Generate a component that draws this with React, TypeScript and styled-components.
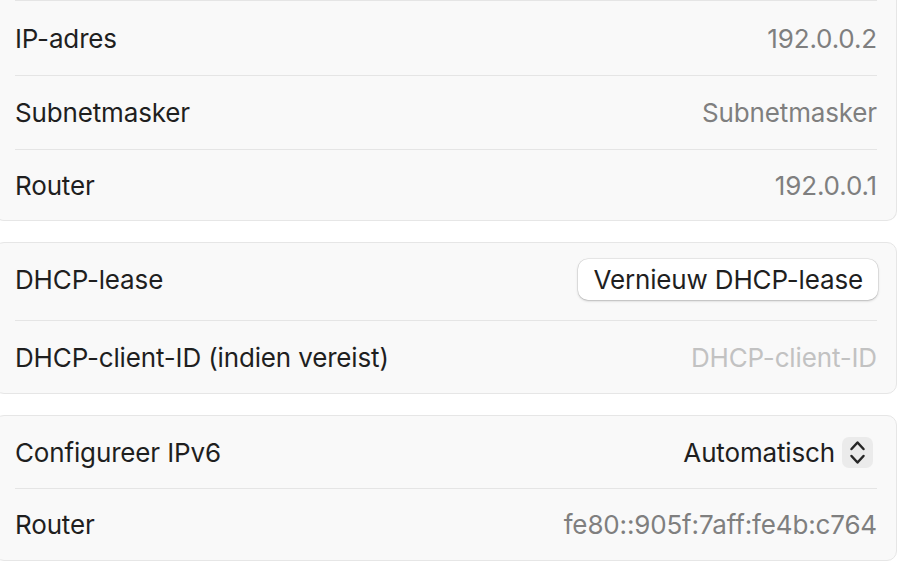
import React from "react";
import styled, { createGlobalStyle } from "styled-components";

const Global = createGlobalStyle`
  html, body { margin: 0; padding: 0; background: #ffffff; }
  body { font-family: Inter, "Noto Sans", "Liberation Sans", sans-serif; -webkit-font-smoothing: antialiased; }
`;

const Viewport = styled.div`
  width: 920px;
  height: 572px;
  overflow: hidden;
  background: #ffffff;
`;

const Content = styled.div`
  display: flex;
  flex-direction: column;
  gap: 21px;
  margin: 0 23px 0 -6px;
`;

const Card = styled.section<{ $cutTop?: boolean }>`
  background: #f9f9f9;
  border: 1px solid #e6e6e6;
  border-top: ${(p) => (p.$cutTop ? "none" : "1px solid #e6e6e6")};
  border-radius: ${(p) => (p.$cutTop ? "0 0 10px 10px" : "10px")};
  padding: 0 19px 0 20px;
  display: flex;
  flex-direction: column;
`;

const Row = styled.div<{ $h?: number; $rule?: boolean; $pb?: number }>`
  display: flex;
  align-items: center;
  justify-content: space-between;
  box-sizing: border-box;
  height: ${(p) => p.$h ?? 72}px;
  padding-bottom: ${(p) => p.$pb ?? 0}px;
  border-top: ${(p) => (p.$rule ? "1px solid #e5e5e5" : "none")};
  & + & {
    border-top: 1px solid #e5e5e5;
  }
`;

const Label = styled.span`
  font-size: 26px;
  color: #1f1f1f;
  letter-spacing: -0.15px;
`;

const Value = styled.span<{ $tone?: "muted" | "placeholder" }>`
  font-size: 26px;
  letter-spacing: -0.15px;
  color: ${(p) => (p.$tone === "placeholder" ? "#c2c2c2" : "#7f7f7f")};
`;

const Button = styled.button`
  height: 41px;
  padding: 0 15px;
  margin-right: -1px;
  border: none;
  border-radius: 10px;
  background: #ffffff;
  box-shadow: 0 0 0 0.5px rgba(0, 0, 0, 0.12), 0 1px 2.5px rgba(0, 0, 0, 0.22);
  font-family: inherit;
  font-size: 26px;
  letter-spacing: -0.15px;
  color: #1f1f1f;
`;

const Popup = styled.div`
  display: flex;
  align-items: center;
  gap: 7px;
  margin-right: 4px;
  font-size: 26px;
  letter-spacing: -0.15px;
  color: #1f1f1f;
`;

const Stepper = styled.span`
  width: 31px;
  height: 31px;
  border-radius: 7px;
  background: #ebebeb;
  display: flex;
  align-items: center;
  justify-content: center;
`;

const UpDown = () => (
  <svg width="31" height="31" viewBox="0 0 31 31" fill="none">
    <path d="M9.5 12 L15.5 5.5 L21.5 12" stroke="#262626" strokeWidth="2.5" strokeLinecap="round" strokeLinejoin="round" />
    <path d="M9.5 19 L15.5 25.5 L21.5 19" stroke="#262626" strokeWidth="2.5" strokeLinecap="round" strokeLinejoin="round" />
  </svg>
);

export default function App() {
  return (
    <>
      <Global />
      <Viewport>
        <Content>
          <Card $cutTop>
            <Row $h={75} $rule>
              <Label>IP-adres</Label>
              <Value>192.0.0.2</Value>
            </Row>
            <Row $h={74}>
              <Label>Subnetmasker</Label>
              <Value>Subnetmasker</Value>
            </Row>
            <Row $h={71}>
              <Label>Router</Label>
              <Value>192.0.0.1</Value>
            </Row>
          </Card>
          <Card>
            <Row $h={77} $pb={5}>
              <Label>DHCP-lease</Label>
              <Button>Vernieuw DHCP-lease</Button>
            </Row>
            <Row $h={73}>
              <Label>DHCP-client-ID (indien vereist)</Label>
              <Value $tone="placeholder">DHCP-client-ID</Value>
            </Row>
          </Card>
          <Card>
            <Row $h={72}>
              <Label>Configureer IPv6</Label>
              <Popup>
                Automatisch
                <Stepper>
                  <UpDown />
                </Stepper>
              </Popup>
            </Row>
            <Row $h={72}>
              <Label>Router</Label>
              <Value>fe80::905f:7aff:fe4b:c764</Value>
            </Row>
          </Card>
        </Content>
      </Viewport>
    </>
  );
}
